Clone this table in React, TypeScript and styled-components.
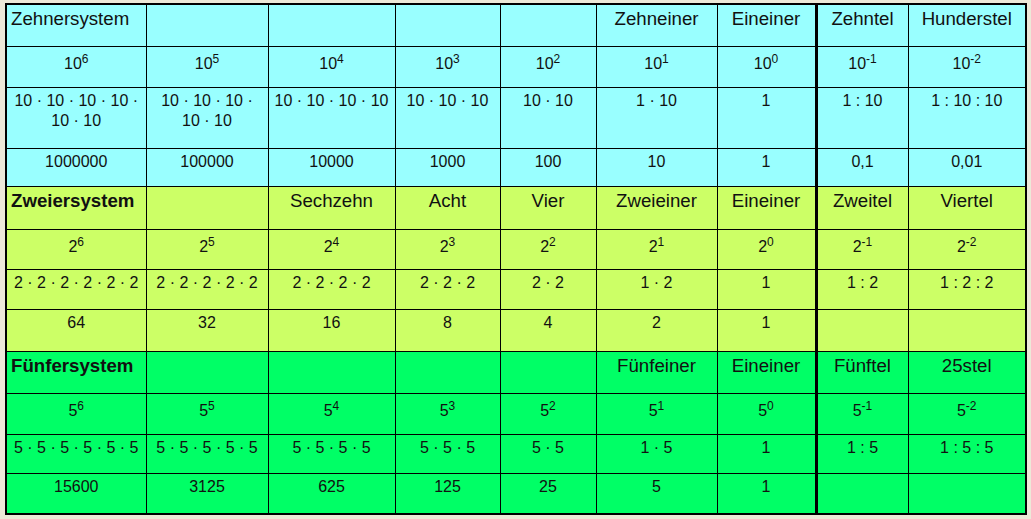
import React from 'react';
import styled, { createGlobalStyle } from 'styled-components';

type Section = {
  color: string;
  title: string;
  bold: boolean;
  names: string[];
  base: string;
  products: string[];
  values: string[];
};

const EXPS = ['6', '5', '4', '3', '2', '1', '0', '-1', '-2'];
const WIDTHS = [140, 122, 127, 105, 96, 121, 99, 92, 118];

const SECTIONS: Section[] = [
  {
    color: '#99ffff',
    title: 'Zehnersystem',
    bold: false,
    names: ['', '', '', '', 'Zehneiner', 'Eineiner', 'Zehntel', 'Hunderstel'],
    base: '10',
    products: [
      '10 · 10 · 10 · 10 · 10 · 10',
      '10 · 10 · 10 · 10 · 10',
      '10 · 10 · 10 · 10',
      '10 · 10 · 10',
      '10 · 10',
      '1 · 10',
      '1',
      '1 : 10',
      '1 : 10 : 10',
    ],
    values: ['1000000', '100000', '10000', '1000', '100', '10', '1', '0,1', '0,01'],
  },
  {
    color: '#ccff66',
    title: 'Zweiersystem',
    bold: true,
    names: ['', 'Sechzehn', 'Acht', 'Vier', 'Zweieiner', 'Eineiner', 'Zweitel', 'Viertel'],
    base: '2',
    products: [
      '2 · 2 · 2 · 2 · 2 · 2',
      '2 · 2 · 2 · 2 · 2',
      '2 · 2 · 2 · 2',
      '2 · 2 · 2',
      '2 · 2',
      '1 · 2',
      '1',
      '1 : 2',
      '1 : 2 : 2',
    ],
    values: ['64', '32', '16', '8', '4', '2', '1', '', ''],
  },
  {
    color: '#00ff66',
    title: 'Fünfersystem',
    bold: true,
    names: ['', '', '', '', 'Fünfeiner', 'Eineiner', 'Fünftel', '25stel'],
    base: '5',
    products: [
      '5 · 5 · 5 · 5 · 5 · 5',
      '5 · 5 · 5 · 5 · 5',
      '5 · 5 · 5 · 5',
      '5 · 5 · 5',
      '5 · 5',
      '1 · 5',
      '1',
      '1 : 5',
      '1 : 5 : 5',
    ],
    values: ['15600', '3125', '625', '125', '25', '5', '1', '', ''],
  },
];

// row heights per section: name, power, product, value
const HEIGHTS = [
  [42, 41, 61, 38],
  [43, 40, 40, 42],
  [42, 41, 39, 41],
];

export default function App() {
  return (
    <>
      <GlobalStyle />
      <Page>
        <Table>
          <colgroup>
            {WIDTHS.map((w, i) => (
              <col key={i} style={{ width: w }} />
            ))}
          </colgroup>
          <tbody>
            {SECTIONS.map((s, si) => {
              const h = HEIGHTS[si];
              return (
                <React.Fragment key={s.title}>
                  <Row $bg={s.color} style={{ height: h[0] }}>
                    <TitleCell $bold={s.bold}>{s.title}</TitleCell>
                    {s.names.map((n, i) => (
                      <NameCell key={i}>{n}</NameCell>
                    ))}
                  </Row>
                  <Row $bg={s.color} style={{ height: h[1] }}>
                    {EXPS.map((e) => (
                      <PowerCell key={e}>
                        {s.base}
                        <Sup>{e}</Sup>
                      </PowerCell>
                    ))}
                  </Row>
                  <Row $bg={s.color} style={{ height: h[2] }}>
                    {s.products.map((p, i) => (
                      <Td key={i}>{p}</Td>
                    ))}
                  </Row>
                  <Row $bg={s.color} style={{ height: h[3] }}>
                    {s.values.map((v, i) => (
                      <Td key={i}>{v}</Td>
                    ))}
                  </Row>
                </React.Fragment>
              );
            })}
          </tbody>
        </Table>
      </Page>
    </>
  );
}

const GlobalStyle = createGlobalStyle`
  html, body {
    margin: 0;
    padding: 0;
    background: #ece9d8;
  }
  body {
    font-family: "Liberation Sans", Arial, sans-serif;
    color: #000;
  }
`;

const Page = styled.div`
  padding: 3px 0 0 5px;
  width: 1031px;
  height: 519px;
  box-sizing: border-box;
`;

const Table = styled.table`
  border-collapse: collapse;
  table-layout: fixed;
  width: 1020px;
  border: 2px solid #000;
`;

const Row = styled.tr<{ $bg: string }>`
  background: ${({ $bg }) => $bg};
`;

const Td = styled.td`
  border: 1px solid #000;
  padding: 3px 6px 0;
  vertical-align: top;
  text-align: center;
  font-size: 16px;
  line-height: 20.8px;
  color: #111;

  &:nth-child(8) {
    border-left: 3px solid #000;
  }
`;

const PowerCell = styled(Td)`
  padding-top: 7px;
`;

const NameCell = styled(Td)`
  font-size: 18.67px;
  line-height: 21.5px;
`;

const TitleCell = styled(Td)<{ $bold: boolean }>`
  text-align: left;
  padding-left: 4px;
  font-size: 18.67px;
  line-height: 21.5px;
  font-weight: ${({ $bold }) => ($bold ? 700 : 400)};
`;

const Sup = styled.sup`
  font-size: 12px;
  line-height: 0;
  vertical-align: 6px;
`;
